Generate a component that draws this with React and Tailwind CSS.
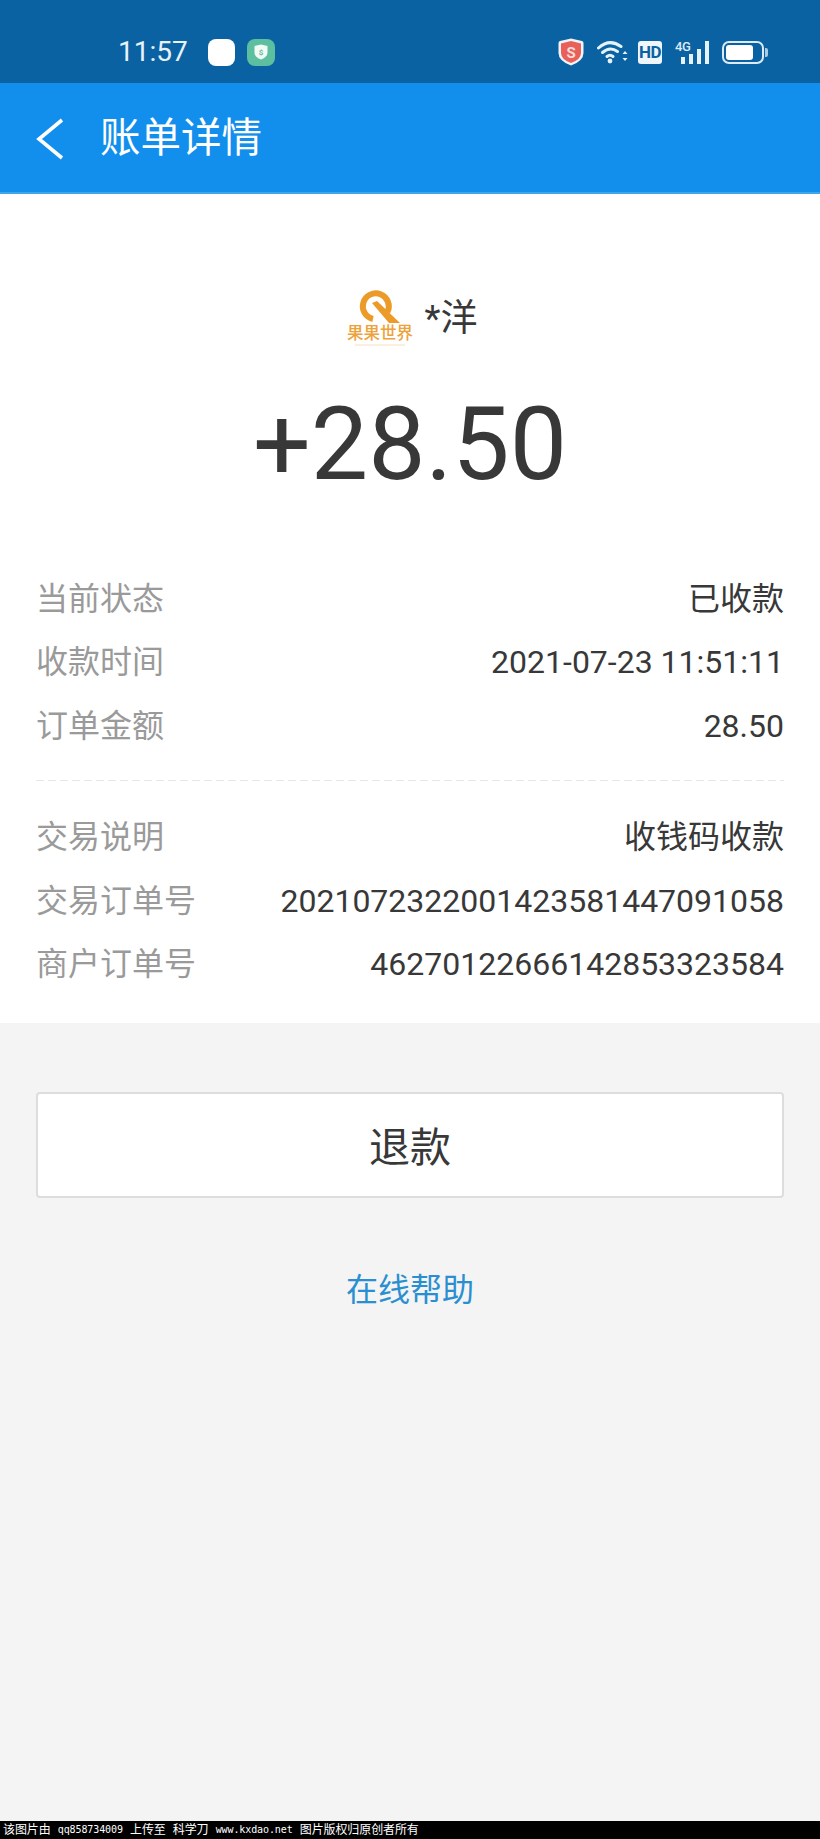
const font = "font-['Roboto','Noto_Sans_CJK_SC',sans-serif]";

const topRows = [
  { label: '当前状态', value: '已收款' },
  { label: '收款时间', value: '2021-07-23 11:51:11' },
  { label: '订单金额', value: '28.50' },
];

const bottomRows = [
  { label: '交易说明', value: '收钱码收款' },
  { label: '交易订单号', value: '2021072322001423581447091058' },
  { label: '商户订单号', value: '46270122666142853323584' },
];

const Row = ({ label, value }) => (
  <div className="flex h-[63.5px] items-center justify-between text-[32px] leading-none">
    <span className="text-[#9a9a9a]">{label}</span>
    <span className="text-[#383838]">{value}</span>
  </div>
);

const StatusIcons = () => (
  <div className="flex items-center">
    {/* red shield */}
    <svg width="26" height="28" viewBox="0 0 26 28" className="mr-[13px]">
      <path d="M13 0.5 L24 3 Q25.5 3.5 25.5 5 V15 Q25.5 23 13 27.5 Q0.5 23 0.5 15 V5 Q0.5 3.5 2 3 Z" fill="#eef4f8" />
      <path d="M13 3 L23 5.5 V15 Q23 21.5 13 25 Q3 21.5 3 15 V5.5 Z" fill="#e9605a" />
      <text x="13" y="19.5" textAnchor="middle" fontSize="15" fontWeight="700" fill="#f6dcdb" fontFamily="Roboto, sans-serif">S</text>
    </svg>
    {/* wifi */}
    <svg width="31" height="24" viewBox="0 0 31 24" className="mr-[10px]">
      <g fill="none" stroke="#e6f2fa" strokeWidth="3" strokeLinecap="round">
        <path d="M1.5 8 Q12.5 -2 24 6.5" />
        <path d="M5.5 12.5 Q13 6 20.5 11.5" />
        <path d="M10 16.5 Q13 14 16 16.5" />
      </g>
      <circle cx="13" cy="21" r="2.4" fill="#e6f2fa" />
      <path d="M25.5 14 L28 11 L30.5 14 Z M25.5 18 L28 21 L30.5 18 Z" fill="#e6f2fa" />
    </svg>
    {/* HD */}
    <div className="mr-[13px] flex h-[23px] w-[24px] items-center justify-center rounded-[3px] bg-[#eef6fb] text-[17px] font-bold leading-none tracking-[-0.5px] text-[#0b62a3] font-['Roboto',sans-serif]">
      HD
    </div>
    {/* 4G signal */}
    <div className="relative mr-[13px] flex h-[24px] w-[34px] items-end justify-end gap-[4px]">
      <span className="absolute left-0 top-0 text-[13px] font-medium leading-none tracking-[-0.5px] text-[#dcebf6] font-['Roboto',sans-serif]">4G</span>
      <span className="h-[7px] w-[4px] bg-[#e6f2fa]" />
      <span className="h-[10px] w-[4px] bg-[#e6f2fa]" />
      <span className="h-[15px] w-[4px] bg-[#e6f2fa]" />
      <span className="h-[23px] w-[4px] bg-[#e6f2fa]" />
    </div>
    {/* battery */}
    <div className="flex items-center">
      <div className="flex h-[23px] w-[42px] items-center rounded-[7px] border-2 border-[#dcebf6] p-[2px]">
        <div className="h-full w-[27px] rounded-[3px] bg-white" />
      </div>
      <div className="ml-[1px] h-[9px] w-[3px] rounded-r-[2px] bg-[#a9cbe3]" />
    </div>
  </div>
);

const Logo = () => (
  <svg width="70" height="60" viewBox="0 0 70 60">
    {/* Q ring with diagonal tail */}
    <path d="M28 31 A13 13 0 1 1 42.5 24" fill="none" stroke="#ec9a28" strokeWidth="6" />
    <path d="M27 15 L32 13 L55 35 L44 35 Z" fill="#ec9a28" />
    <text x="35" y="51" textAnchor="middle" fontSize="16.5" fontWeight="500" fill="#eda23a" fontFamily="'Noto Sans CJK SC', sans-serif">果果世界</text>
    <path d="M10 57 H60" stroke="#f6e0bd" strokeWidth="1" />
  </svg>
);

const App = () => {
  return (
    <div className={`flex h-[1839px] w-[820px] flex-col overflow-hidden bg-[#f4f4f4] ${font}`}>
      {/* Status bar */}
      <div className="flex h-[83px] shrink-0 items-center justify-between bg-[#0b62a3] pl-[118px] pr-[52px] pt-[21px]">
        <div className="flex items-center">
          <span className="w-[70px] text-[28px] leading-none text-[#e8f2f9]">11:57</span>
          <div className="ml-[20px] h-[27px] w-[27px] rounded-[8px] bg-white" />
          <div className="ml-[12px] flex h-[27px] w-[28px] items-center justify-center rounded-[8px] bg-[#5cbf9f]">
            <svg width="14" height="16" viewBox="0 0 14 16">
              <path d="M7 0.5 L13.5 2 V8.5 Q13.5 13 7 15.5 Q0.5 13 0.5 8.5 V2 Z" fill="#f2faf6" />
              <text x="7" y="11" textAnchor="middle" fontSize="8" fontWeight="700" fill="#5cbf9f" fontFamily="Roboto, sans-serif">$</text>
            </svg>
          </div>
        </div>
        <StatusIcons />
      </div>

      {/* Header */}
      <div className="flex h-[111px] shrink-0 items-center border-b-2 border-[#3fa6ee] bg-[#128eec] pl-[36px] pt-[2px]">
        <svg width="28" height="42" viewBox="0 0 28 42" fill="none">
          <path d="M26 2 L3 21 L26 40" stroke="#ffffff" strokeWidth="3.6" />
        </svg>
        <h1 className="ml-[36px] text-[40.5px] font-normal leading-none text-white">账单详情</h1>
      </div>

      {/* Detail card */}
      <div className="shrink-0 bg-white px-[36px] pb-[27px]">
        <div className="flex h-[154px] items-end justify-center pl-[2px]">
          <div className="flex items-center">
            <Logo />
            <span className="ml-[10px] text-[37px] leading-none text-[#383838]">*洋</span>
          </div>
        </div>
        <div className="mt-[36px] text-center text-[102px] leading-[120px] text-[#383838]">+28.50</div>
        <div className="mt-[63px]">
          {topRows.map((row) => (
            <Row key={row.label} {...row} />
          ))}
        </div>
        <div className="mt-[22px] h-px bg-[repeating-linear-gradient(to_right,#e6e6e6_0,#e6e6e6_8px,transparent_8px,transparent_12px)]" />
        <div className="mt-[25px]">
          {bottomRows.map((row) => (
            <Row key={row.label} {...row} />
          ))}
        </div>
      </div>

      {/* Actions */}
      <div className="flex flex-1 flex-col px-[36px] pt-[69px]">
        <button className="h-[106px] w-full rounded-[4px] border-2 border-[#dddddd] bg-white pt-[6px] text-[41px] leading-none text-[#383838]">
          退款
        </button>
        <div className="mt-[76px] text-center text-[32px] leading-none text-[#2a8fd0]">在线帮助</div>
      </div>

      {/* Watermark strip */}
      <div className="flex h-[18px] shrink-0 items-center whitespace-pre bg-black pl-[3px] text-[12px] leading-none tracking-[-0.1px] text-white font-['DejaVu_Sans_Mono','Noto_Sans_CJK_SC',monospace]">
        该图片由 <span className="text-[10px]">qq858734009</span> 上传至 科学刀 <span className="text-[10px]">www.kxdao.net</span> 图片版权归原创者所有
      </div>
    </div>
  );
};

export default App;
